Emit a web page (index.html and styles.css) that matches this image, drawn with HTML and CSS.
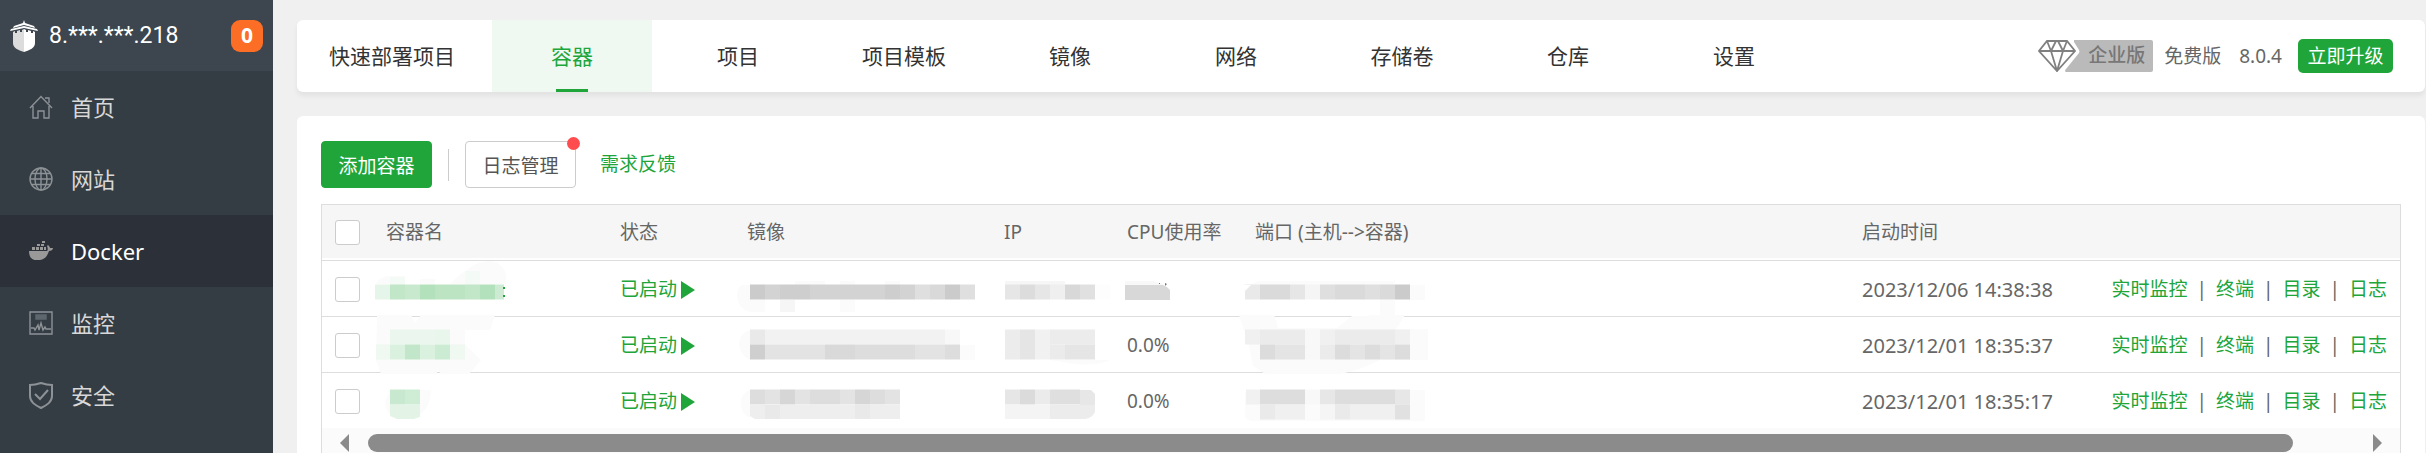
FILE: index.html
```html
<!DOCTYPE html>
<html lang="zh-CN">
<head>
<meta charset="utf-8">
<title>Docker - 容器</title>
<meta name="viewport" content="width=device-width,initial-scale=1.0">
<link rel="stylesheet" href="styles.css">
</head>
<body>
<div class="app">
<aside class="sidebar">
	<div class="server">
		<svg class="logo" width="30" height="32" viewBox="0 0 30 32">
			<path d="M15 0l1 3 9 3 1 2-11-3-11 3 1-2 9-3z" fill="#fff"/>
			<path d="M15 6l13 3 1 2-14-3-14 3 1-2z" fill="#fff"/>
			<path d="M4 12l2-1v2h2v-2l3-1v2h2v-2l2-1v23C9 30 4 28 4 23z" fill="#dcdcdc"/>
			<path d="M26 12l-2-1v2h-2v-2l-3-1v2h-2v-2l-2-1v23c6-2 11-4 11-9z" fill="#fff"/>
		</svg>
		<span class="ip">8.***.***.218</span>
		<span class="badge">0</span>
	</div>
	<nav class="menu">
		<a href="#">
			<svg width="24" height="24" viewBox="0 0 24 24" fill="none" stroke="#8d9296" stroke-width="1.4"><path d="M1 13L12 1.500l11 11.500M4 11v12h5v-7h6v7h5V11M16 3h4v5"/></svg>
			首页
		</a>
		<a href="#">
			<svg width="24" height="24" viewBox="0 0 24 24" fill="none" stroke="#8d9296" stroke-width="1.4"><circle cx="12" cy="12" r="11"/><ellipse cx="12" cy="12" rx="6" ry="11"/><path d="M12 1v22M1 12h22M3 6.500h18M3 17.500h18"/></svg>
			网站
		</a>
		<a href="#" class="on">
			<svg width="24" height="24" viewBox="0 0 24 24" fill="#999"><path d="M0 12h18c1-1 1-3 0-5l1-1c1 1 2 2 2 3h3c0 2-2 3-4 3-2 6-5 9-11 9H7c-5 0-7-4-7-9z"/><path d="M3 8h3v3H3zM7 8h3v3H7zM11 8h3v3h-3zM15 8h2v3h-2zM8 5h3v2H8zM12 5h3v2h-3zM13 2h3v2h-3z"/></svg>
			Docker
		</a>
		<a href="#">
			<svg width="24" height="24" viewBox="0 0 24 24" fill="none" stroke="#8d9296" stroke-width="1.4"><path d="M1 1h22v22H1z"/><path d="M7 4h10v4H7z" fill="#5f676e" stroke="#5f676e"/><path d="M2 17h3l1 2 3-5 1 5 2-7 2 7 2-3 1 2h5"/></svg>
			监控
		</a>
		<a href="#">
			<svg width="24" height="28" viewBox="0 0 24 28" fill="none" stroke="#8d9296" stroke-width="2"><path d="M12 2c3 1 7 2 11 2v11c0 6-5 9-11 12C6 24 1 21 1 15V4c4 0 8-1 11-2z"/><path d="M6 13l5 5 8-9"/></svg>
			安全
		</a>
	</nav>
</aside>

<main class="main">
	<header class="topbar card">
		<nav class="tabs">
			<a href="#" class="first">快速部署项目</a>
			<a href="#" class="on">容器</a>
			<a href="#">项目</a>
			<a href="#">项目模板</a>
			<a href="#">镜像</a>
			<a href="#">网络</a>
			<a href="#">存储卷</a>
			<a href="#">仓库</a>
			<a href="#">设置</a>
		</nav>
		<div class="version">
			<span class="pro">
				<svg width="42" height="32" viewBox="0 0 42 32">
					<path d="M36 0h6v32H28q-2-1 0-3L41 13q1-1 0-3l-5-8z" fill="#bababa"/>
					<path d="M9 1h20l8 10-18 20L1 11zM1 11h36M9 1l4 10 6 20 6-20 4-10M13 11l5-10M25 11L20 1" fill="none" stroke="#808080" stroke-width="1.800"/>
				</svg>
				<b>企业版</b>
			</span>
			<span class="free">免费版</span>
			<span class="num">8.0.4</span>
			<button type="button" class="upgrade">立即升级</button>
		</div>
	</header>

	<section class="content card">
		<div class="toolbar">
			<button type="button" class="btn btn-add">添加容器</button>
			<i class="line"></i>
			<button type="button" class="btn btn-log">日志管理<i class="dot"></i></button>
			<a href="#">需求反馈</a>
		</div>
		<div class="tablebox">
			<table>
				<colgroup>
					<col class="c-check"><col class="c-name"><col class="c-status"><col class="c-image"><col class="c-ip"><col class="c-cpu"><col><col class="c-time"><col class="c-ops">
				</colgroup>
				<thead>
					<tr>
						<th><input type="checkbox" aria-label="全选"></th>
						<th>容器名</th>
						<th>状态</th>
						<th>镜像</th>
						<th>IP</th>
						<th>CPU使用率</th>
						<th>端口 (主机--&gt;容器)</th>
						<th>启动时间</th>
						<th></th>
					</tr>
				</thead>
				<tbody>
					<tr>
						<td><input type="checkbox" aria-label="选择容器1"></td>
						<td class="mask"><svg width="200" height="55">
							<path class="haze" d="M77 23q12-12 26-20 16-6 24 1 8 6 6 19zM3 23q4-8 14-8h15v8zM47 18h15v5H47z"/>
							<path fill="#f4fbf6" d="M92 10h15v14H92zM17 16h15v8H17z"/>
							<path stroke="#e6f5e9" d="M2 31h15"/><path stroke="#c1e6c8" d="M17 31h15M92 31h15"/><path stroke="#c8e9cd" d="M32 31h15"/><path stroke="#b3e1bb" d="M47 31h15M107 31h15"/><path stroke="#bce4c3" d="M62 31h30"/><path stroke="#cdebd2" d="M122 31h9"/>
							<path fill="#20a53a" d="M130 26h2v2h-2zM130 34h2v2h-2z"/>
						</svg></td>
						<td><a href="#" class="run">已启动<i class="play"></i></a></td>
						<td class="mask"><svg width="250" height="55">
							<path class="haze" d="M16 24H8q-5 2-5 12 2 13 14 15h14V39H16zM61 20h30v4H61zM106 20h15v4h-15zM151 20h15v4h-15zM106 39h15v12h-15z"/>
							<path fill="#f6f6f6" d="M46 39h15v12H46z"/>
							<path stroke="#cbcbcb" d="M16 31h15M211 31h15"/><path stroke="#d3d3d3" d="M31 31h15M76 31h75M166 31h15"/><path stroke="#cecece" d="M46 31h30M151 31h15"/><path stroke="#dfdfdf" d="M181 31h15M226 31h15"/><path stroke="#d9d9d9" d="M196 31h15"/>
						</svg></td>
						<td class="mask"><svg width="120" height="55">
							<path fill="#f6f6f6" d="M14 20h60v4H14z"/>
							<path stroke="#e6e6e6" d="M14 31h15M44 31h15"/><path stroke="#dcdcdc" d="M29 31h15"/><path stroke="#efefef" d="M59 31h15"/><path stroke="#d8d8d8" d="M74 31h15"/><path stroke="#e0e0e0" d="M89 31h15"/><path stroke="#fdfdfd" d="M104 31h15"/>
						</svg></td>
						<td class="mask"><svg width="120" height="55">
							<path fill="#f8f8f8" d="M11 20h28l12 4H11z"/>
							<path fill="#d8d8d8" d="M11 24h38q5 2 7 5v10H11z"/>
							<path fill="#777" d="M51 22l2 1-2 2zM45 22h1v1h-1z"/>
						</svg></td>
						<td class="mask"><svg width="250" height="55">
							<path class="haze" d="M8 24l8-4h137v37l-10 12-48-2 15-12h28V39h15V24zM168 24h15v15h-15z"/>
							<path fill="#fff" d="M18 39h120v16H18z"/>
							<path stroke="#e9e9e9" d="M3 31h15"/><path stroke="#dadada" d="M18 31h30M93 31h30M138 31h15"/><path stroke="#e6e6e6" d="M48 31h15"/><path stroke="#f5f5f5" d="M63 31h15"/><path stroke="#dfdfdf" d="M78 31h15M123 31h15"/><path stroke="#cbcbcb" d="M153 31h15"/><path fill="#fff" d="M3 24h6l-6 6z"/>
						</svg></td>
						<td>2023/12/06 14:38:38</td>
						<td class="ops"><a href="#">实时监控</a><span>|</span><a href="#">终端</a><span>|</span><a href="#">目录</a><span>|</span><a href="#">日志</a></td>
					</tr>
					<tr>
						<td><input type="checkbox" aria-label="选择容器2"></td>
						<td class="mask"><svg width="200" height="55">
							<path class="haze" d="M4-2h34l4 8 6-8h74l-5 15H92v15l16 15-12 14H68l-4-5v5H8L3 43z"/>
							<path stroke="#ebf6ee" d="M17 20h45"/><path stroke="#e8f6eb" d="M62 20h15"/>
							<path stroke="#eff8f1" d="M3 35h14M77 35h15"/><path stroke="#dbf1df" d="M17 35h15M47 35h15"/><path stroke="#c2e6ca" d="M32 35h15"/><path stroke="#ccebd3" d="M62 35h15"/>
						</svg></td>
						<td><a href="#" class="run">已启动<i class="play"></i></a></td>
						<td class="mask"><svg width="250" height="55">
							<path class="haze" d="M16 13q-10 2-11 14 0 10 11 16zM226 28h15v15h-15z"/>
							<path stroke="#e9e9e9" d="M16 20h15"/><path stroke="#f2f2f2" d="M31 20h180"/><path stroke="#f8f8f8" d="M211 20h15"/>
							<path stroke="#cfcfcf" d="M16 35h15"/><path stroke="#e3e3e3" d="M31 35h60M181 35h30"/><path stroke="#d9d9d9" d="M91 35h30"/><path stroke="#dddddd" d="M121 35h60M211 35h15"/>
						</svg></td>
						<td class="mask"><svg width="120" height="55">
							<path class="haze" d="M60 43h59q-12 6-36 4z"/>
							<path stroke="#ececec" d="M14 20h15M59 20h45M14 35h15"/><path stroke="#e5e5e5" d="M29 20h15M29 35h15M74 35h30"/><path stroke="#f1f1f1" d="M44 20h15M44 35h15"/><path stroke="#ebebeb" d="M59 35h15"/>
						</svg></td>
						<td>0.0%</td>
						<td class="mask"><svg width="250" height="55">
							<path class="haze" d="M-3-2h35l4 13h82l9-13h36l-9 14h32v31h-48q-20 10-40 14H23l-12-8-4-20z"/>
							<path stroke="#f0f0f0" d="M3 20h15M78 20h15"/><path stroke="#ebebeb" d="M18 20h45M93 20h60M78 35h15"/><path stroke="#f0f0f0" d="M153 20h15"/><path stroke="#f8f8f8" d="M63 20h15M63 35h15"/>
							<path stroke="#dcdcdc" d="M18 35h15M93 35h15M123 35h15M153 35h15"/><path stroke="#e4e4e4" d="M33 35h30M108 35h15M138 35h15"/>
						</svg></td>
						<td>2023/12/01 18:35:37</td>
						<td class="ops"><a href="#">实时监控</a><span>|</span><a href="#">终端</a><span>|</span><a href="#">目录</a><span>|</span><a href="#">日志</a></td>
					</tr>
					<tr>
						<td><input type="checkbox" aria-label="选择容器3"></td>
						<td class="mask"><svg width="200" height="55">
							<path class="haze" d="M17 17h41q-1 24-20 28H23q-11-5-11-16z"/>
							<path stroke="#c8e9cf" d="M17 24h15"/><path stroke="#cfecd5" d="M32 24h15"/>
							<path fill="#e3f4e6" d="M17 32h30v12l-6 2H24l-7-3z"/>
						</svg></td>
						<td><a href="#" class="run">已启动<i class="play"></i></a></td>
						<td class="mask"><svg width="250" height="55">
							<path class="haze" d="M16 17q-9 3-9 13 0 11 9 15z"/>
							<path stroke="#dddddd" d="M16 24h15M76 24h30M136 24h15"/><path stroke="#e3e3e3" d="M31 24h15M61 24h15M106 24h15M151 24h15"/><path stroke="#d6d6d6" d="M46 24h15M121 24h15"/>
							<path fill="#eee" d="M16 32h150v14H21l-5-3z"/><path fill="#e9e9e9" d="M31 32h15v14H31zM121 32h15v14h-15z"/>
						</svg></td>
						<td class="mask"><svg width="120" height="55">
							<path stroke="#e6e6e6" d="M14 24h15"/><path stroke="#dbdbdb" d="M29 24h15"/><path stroke="#ebebeb" d="M44 24h15"/><path stroke="#dfdfdf" d="M59 24h30"/><path fill="#e7e7e7" d="M89 17h11l4 4v11H89z"/>
							<path fill="#f4f4f4" d="M14 32h45v14H14z"/><path fill="#ececec" d="M59 32h45v7q-3 6-10 7H59z"/>
						</svg></td>
						<td>0.0%</td>
						<td class="mask"><svg width="250" height="55">
							<path class="haze" d="M6 17h177v31H10q-7-1-7-5V20z"/>
							<path stroke="#f1f1f1" d="M4 24h14"/><path stroke="#dddddd" d="M18 24h45M93 24h60"/><path stroke="#f8f8f8" d="M63 24h15"/><path stroke="#e7e7e7" d="M78 24h15M153 24h15"/>
							<path stroke="#eaeaea" d="M18 39h15M93 39h15"/><path stroke="#f0f0f0" d="M33 39h30M108 39h45"/><path stroke="#f5f5f5" d="M78 39h15"/><path stroke="#e1e1e1" d="M153 39h15"/>
						</svg></td>
						<td>2023/12/01 18:35:17</td>
						<td class="ops"><a href="#">实时监控</a><span>|</span><a href="#">终端</a><span>|</span><a href="#">目录</a><span>|</span><a href="#">日志</a></td>
					</tr>
				</tbody>
			</table>
			<div class="scroller">
				<i class="arrow left"></i>
				<div class="track"><div class="thumb"></div></div>
				<i class="arrow right"></i>
			</div>
		</div>
	</section>
</main>
</div>
</body>
</html>
```
FILE: styles.css
```css
* { margin:0; padding:0; box-sizing:border-box; }
body { font:19px/1.4 "Noto Sans","Noto Sans CJK SC",sans-serif; color:#666; background:#f0f0f0; }
a { color:#20a53a; text-decoration:none; }
button { font-family:inherit; cursor:pointer; }
.app { display:flex; height:100vh; overflow:hidden; }

/* 左侧菜单 */
.sidebar { flex:none; width:273px; background:#353d44; }
.server { display:flex; align-items:center; height:71px; padding:0 10px 0 9px; background:#3d454e; }
.logo { margin-right:10px; }
.ip { font:23px/32px Roboto,sans-serif; color:#fff; }
.badge { width:32px; height:32px; margin-left:auto; border-radius:9px; background:#fc6d26; color:#fff; font-size:21px; font-weight:700; line-height:31px; text-align:center; }
.menu a { display:flex; align-items:center; gap:18px; height:72px; padding-left:29px; font-size:22px; color:#d8d8d8; }
.menu a.on { background:#2c3038; color:#fff; }

/* 右侧内容 */
.main { flex:1; min-width:0; display:flex; flex-direction:column; gap:24px; padding:20px 1px 0 24px; }
.card { background:#fff; border-radius:6px; }
.topbar { flex:none; display:flex; justify-content:space-between; height:72px; box-shadow:0 4px 5px rgba(0,0,0,.06); }
.tabs { display:flex; gap:6px; }
.tabs a { position:relative; width:160px; line-height:73px; height:72px; font-size:21px; color:#333; text-align:center; }
.tabs a.first { width:auto; padding:0 31px 0 32px; border-radius:6px 0 0 6px; }
.tabs a.on { background:#eff9f2; color:#20a53a; }
.tabs a.on::after { content:""; position:absolute; left:64px; bottom:0; width:32px; height:3px; background:#20a53a; }
.version { display:flex; align-items:center; padding-right:32px; }
.pro { display:flex; height:32px; margin-right:11px; }
.pro b { padding:0 8px; border-radius:0 2px 2px 0; background:#bababa; color:#777; font-size:19px; font-weight:500; line-height:31px; }
.num { margin:0 16px 0 18px; }
.upgrade { width:95px; height:34px; border:0; border-radius:5px; background:#20a53a; color:#fff; font-size:19px; line-height:32px; }

.content { flex:none; padding:25px 24px 24px; }
.toolbar { display:flex; align-items:center; height:47px; margin-bottom:16px; }
.btn { position:relative; width:111px; height:47px; border:1px solid #ccc; border-radius:4px; background:#fff; color:#555; font-size:19px; }
.btn-add { border-color:#20a53a; background:#20a53a; color:#fff; }
.btn-log { margin-right:24px; }
.line { width:1px; height:32px; margin:0 16px; background:#ccc; }
.dot { position:absolute; top:-5px; right:-5px; width:13px; height:13px; border-radius:50%; background:#ff4d4f; }

/* 容器列表 */
.tablebox { border:1px solid #ddd; }
table { width:100%; table-layout:fixed; border-collapse:separate; border-spacing:0; }
.c-check { width:51px; }
.c-name { width:234px; }
.c-status { width:127px; }
.c-image { width:257px; }
.c-ip { width:123px; }
.c-cpu { width:128px; }
.c-time { width:249px; }
.c-ops { width:302px; }
th,td { height:56px; padding:0 0 0 13px; border-bottom:1px solid #ddd; text-align:left; font-weight:400; white-space:nowrap; }
th { background:#f6f6f6; box-shadow:inset 0 -2px #fff; }
td { padding-top:2px; }
td:nth-child(8) { font-size:20px; }
tbody tr:last-child td { height:55px; border-bottom:0; }
input[type=checkbox] { appearance:none; display:block; width:25px; height:25px; border:1px solid #ccc; border-radius:3px; background:#fff; }
.mask { padding:0; }
.mask svg { display:block; overflow:visible; stroke-width:15px; }
.haze { fill:#fbfbfb; }
.run { display:flex; align-items:center; gap:4px; }
.play { border-left:14px solid #20a53a; border-top:9px solid transparent; border-bottom:9px solid transparent; }
.ops { padding-right:13px; text-align:right; }
.ops span { margin:0 9px; }

.scroller { display:flex; align-items:center; height:30px; padding:0 18px; background:#fbfbfb; }
.arrow { border:9px solid transparent; }
.arrow.left { border-left:0; border-right-color:#8b8b8b; }
.arrow.right { border-right:0; border-left-color:#8b8b8b; }
.track { flex:1; margin:0 80px 0 19px; }
.thumb { height:18px; border-radius:9px; background:#8b8b8b; }
```
